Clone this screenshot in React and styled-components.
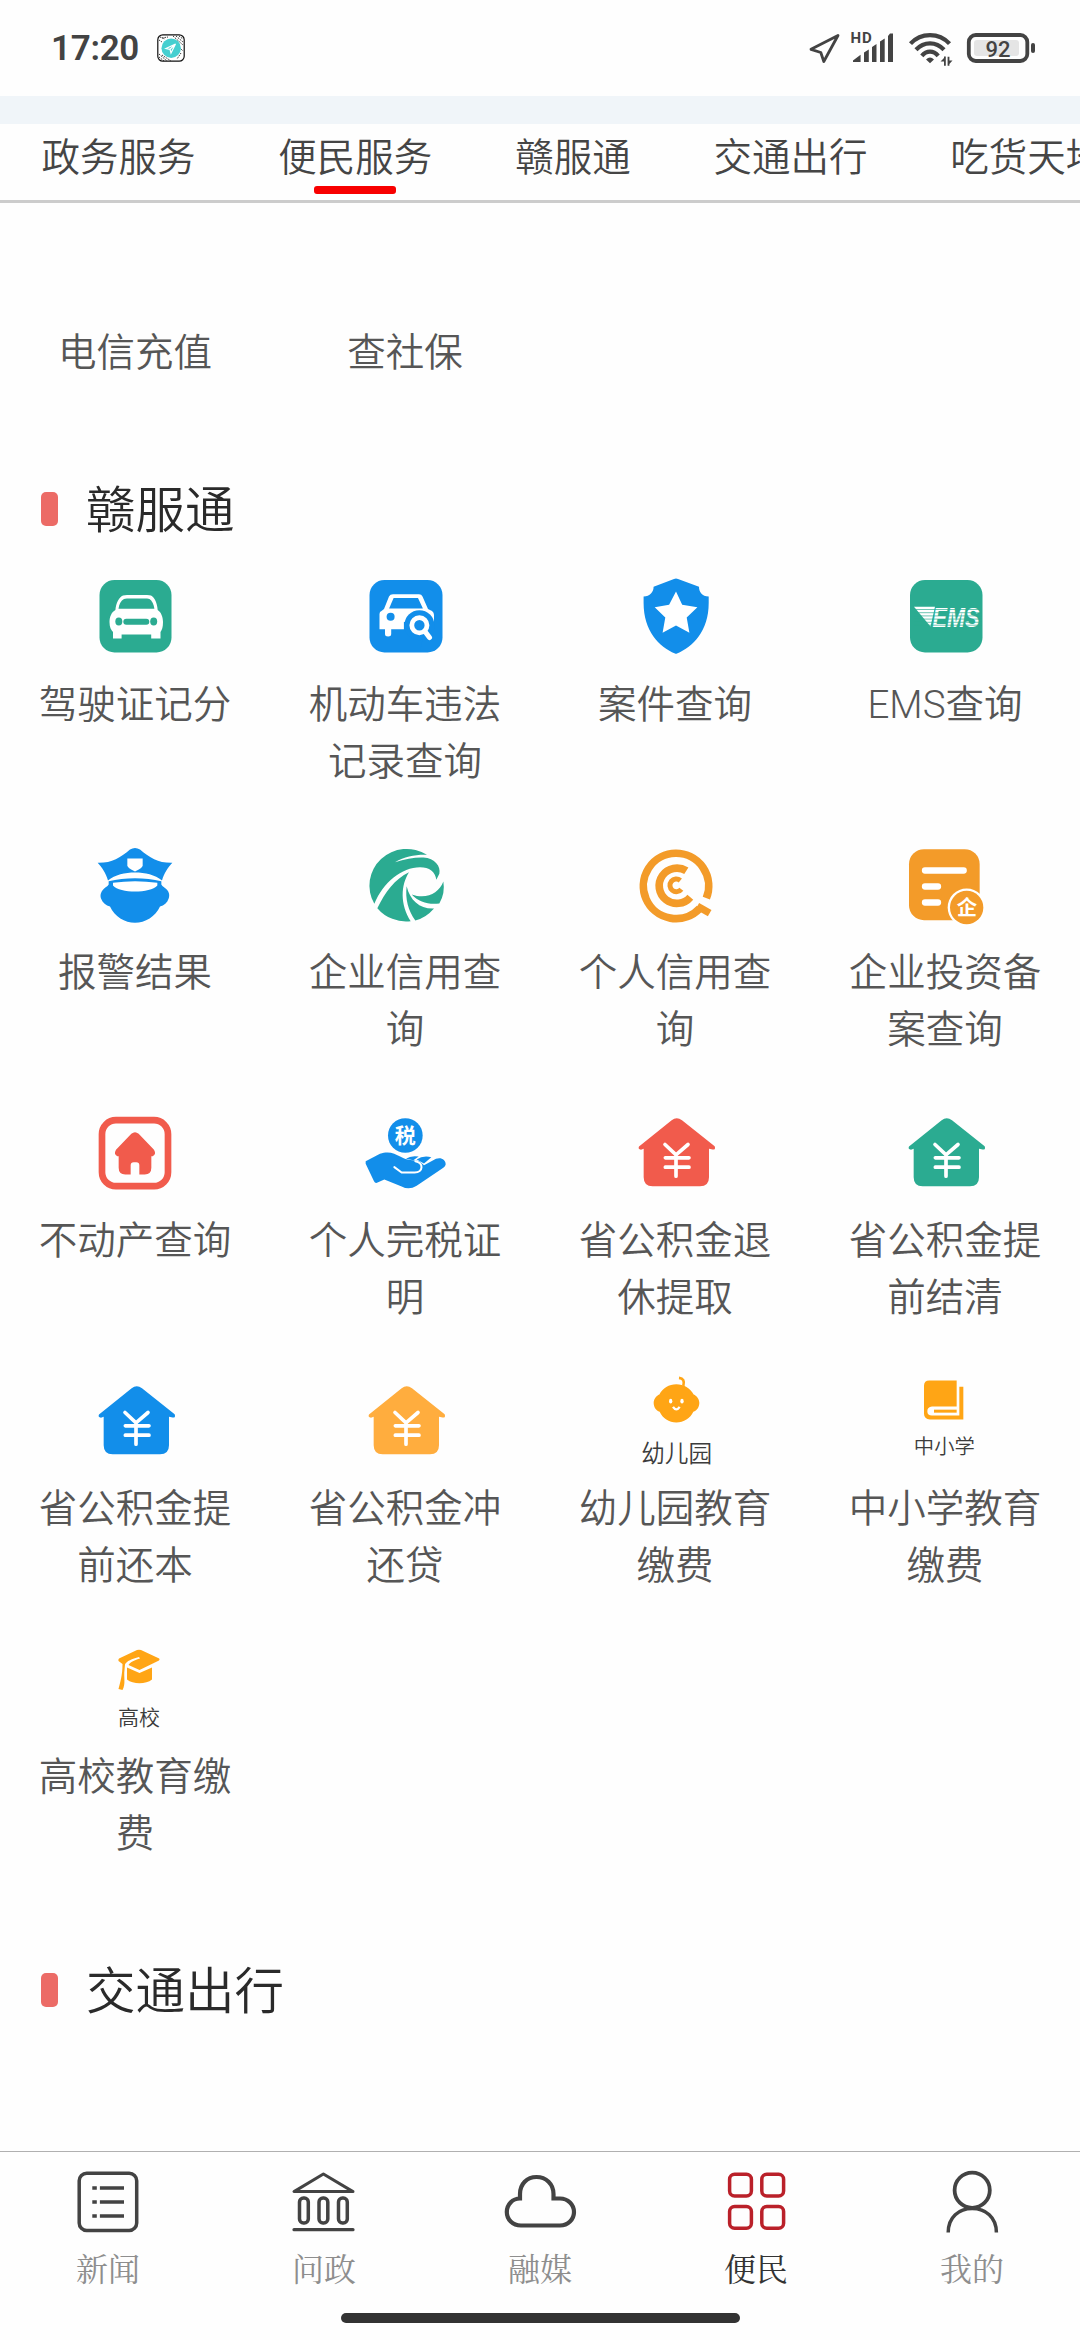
import React from "react";
import styled, { createGlobalStyle } from "styled-components";

const GREEN = "#2bab91";
const BLUE = "#128eea";
const RED = "#f15b4c";
const ORANGE = "#f39b29";
const AMBER = "#ffa515";
const DARK = "#434343";

const GlobalStyle = createGlobalStyle`
  * {
    box-sizing: border-box;
  }
  body {
    margin: 0;
    background: #fefefe;
    font-family: "Noto Sans CJK SC", "Noto Sans", sans-serif;
  }
`;

const Page = styled.div`
  display: flex;
  flex-flow: column;
  width: 1080px;
  height: 2340px;
  overflow: hidden;
  background: #fefefe;
`;

const StatusBar = styled.header`
  display: flex;
  flex: none;
  align-items: center;
  height: 96px;
  padding: 0 44px 0 51px;
`;

const Clock = styled.span`
  width: 89px;
  padding-top: 2px;
  font: 600 35px/48px Roboto, sans-serif;
  letter-spacing: -0.3px;
  color: ${DARK};
  white-space: nowrap;
`;

const AppBadge = styled.svg`
  width: 28px;
  height: 28px;
  margin-left: 17px;
`;

const StatusIcons = styled.div`
  display: flex;
  align-items: center;
  margin-left: auto;
`;

const StatusIcon = styled.svg`
  width: ${(props) => props.$width}px;
  height: 48px;
  margin-left: ${(props) => props.$gap || 0}px;
`;

const Band = styled.div`
  flex: none;
  height: 28px;
  background: #f0f5f9;
`;

const Tabs = styled.nav`
  display: flex;
  flex: none;
  height: 79px;
  padding-left: 41.5px;
  gap: 82.8px;
  border-bottom: 3px solid #ccc;
  overflow: hidden;
`;

const Tab = styled.div`
  display: flex;
  flex: none;
  flex-flow: column;
  align-items: center;
  padding-top: 1.5px;
  font-size: 38.5px;
  line-height: 57px;
  font-weight: 350;
  color: #454545;
  white-space: nowrap;
`;

const TabLine = styled.i`
  width: 82px;
  height: 8px;
  margin-top: 3.5px;
  border-radius: 3px;
  background: #f80000;
`;

const Content = styled.main`
  flex: 1;
  padding-top: 5.5px;
  overflow: hidden;
`;

const SectionHeader = styled.h2`
  display: flex;
  align-items: center;
  height: 141px;
  margin: 0;
  padding: 38px 0 0 41px;
  gap: 28px;
  font-size: 49.5px;
  line-height: 74px;
  font-weight: 350;
  color: #2a2a2a;

  span {
    margin-top: -5px;
  }
`;

const Marker = styled.i`
  width: 17px;
  height: 34px;
  border-radius: 5px;
  background: #ec6b66;
`;

const Grid = styled.div`
  display: grid;
  grid-template-columns: repeat(4, 270px);
`;

const Cell = styled.div`
  display: flex;
  flex-flow: column;
  align-items: center;
  padding: 0 36px 38.5px;
`;

const CellIcon = styled.svg`
  flex: none;
  width: 110px;
  height: 110px;
  overflow: visible;
`;

const Label = styled.div`
  width: 198px;
  margin-top: 5.5px;
  font-family: Roboto, "Noto Sans CJK SC", sans-serif;
  font-size: 38.5px;
  line-height: 57px;
  font-weight: 350;
  color: #565656;
  text-align: center;
`;

const BottomBar = styled.footer`
  display: flex;
  flex: none;
  flex-flow: column;
  align-items: center;
  height: 189px;
  border-top: 1px solid #b0b0b0;
`;

const BottomTabs = styled.div`
  display: grid;
  grid-template-columns: repeat(5, 216px);
  height: 161px;
`;

const BottomTab = styled.div`
  display: flex;
  flex-flow: column;
  align-items: center;
  padding-top: 14px;
  font-family: "Noto Serif CJK SC", "Noto Serif SC", serif;
  font-size: 32px;
  line-height: 48px;
  color: ${(props) => (props.$active ? "#333" : "#8e8e8e")};

  svg {
    width: 80px;
    height: 72px;
    margin-bottom: 5px;
    fill: none;
    stroke: ${(props) => (props.$active ? "#ba2029" : DARK)};
    stroke-width: 3.5;
  }
`;

const HomeBar = styled.div`
  width: 399px;
  height: 10px;
  border-radius: 5px;
  background: #333;
`;

const CarIcon = () => (
  <CellIcon viewBox="0 0 110 110">
    <rect x="19.5" y="19" width="72" height="72.5" rx="15" fill={GREEN} />
    <path
      d="M35.4 49C36 42 39 36 43 34.4Q44.5 34 47 34H67Q69.5 34 71 34.6C75 37 77 42 77.7 49C81 51 83 56 83 61C83 66 82 69 80.5 71V77.5H71.2V73.5H41.6V77.5H33V71C31 69 29.5 66 29.5 61C29.5 56 31.5 51 35.4 49Z"
      fill="#fff"
    />
    <path
      d="M38.5 47.8C39 43 41 39.5 44 38Q45 37.5 47 37.5H67Q68.5 37.5 69.5 38C72 39.5 73.7 43 74.4 47.8Z"
      fill={GREEN}
    />
    <ellipse cx="38.8" cy="60.5" rx="3.5" ry="4.1" fill={GREEN} />
    <ellipse cx="73.7" cy="60.5" rx="3.5" ry="4.1" fill={GREEN} />
    <rect x="43.3" y="57.8" width="26" height="6" rx="3" fill={GREEN} />
  </CellIcon>
);

const CarSearchIcon = () => (
  <CellIcon viewBox="0 0 110 110">
    <rect x="19.5" y="19" width="73" height="72.5" rx="15" fill={BLUE} />
    <path
      d="M34 48L39 35.5Q40 33.2 43 33.2H69Q71.5 33.2 72.5 35.5L78 48L82 50Q84 51.5 84 54V61H53.9V68.2H41.2V73Q41.2 75.5 38.1 75.5Q35 75.5 35 73V68.2H29.5V53Q29.5 50.5 31.5 50Z"
      fill="#fff"
    />
    <path d="M39.1 47.6L43.6 37H68L72.9 47.6Z" fill={BLUE} />
    <circle cx="40.6" cy="55.8" r="4" fill={BLUE} />
    <circle cx="69.4" cy="64.2" r="15" fill={BLUE} />
    <path d="M75 66H84.5V90H70Z" fill={BLUE} />
    <circle cx="69.4" cy="64.2" r="7.6" fill="none" stroke="#fff" strokeWidth="4.8" />
    <path d="M75 70.5L79.5 76.5" stroke="#fff" strokeWidth="5" strokeLinecap="round" />
  </CellIcon>
);

const ShieldIcon = () => (
  <CellIcon viewBox="0 0 110 110">
    <path
      d="M54 18Q56 17 58 18L79 25.8C79 31 82 35.5 88.7 35.5V42C88.7 70 73 86 57 92.5Q56 93 55 92.5C39 86 23.6 70 23.6 42V35.5C30 35.5 33.6 31 33.6 25.8Z"
      fill={BLUE}
    />
    <path
      d="M56 30.5L62.2 43.8L77.4 46.2L66.7 56.5L69.4 71.8L56 64.5L42.6 71.8L45.3 56.5L34.7 46.2L49.1 43.8Z"
      fill="#fff"
    />
  </CellIcon>
);

const EmsIcon = () => (
  <CellIcon viewBox="0 0 110 110">
    <rect x="20" y="19" width="72.5" height="72.5" rx="15" fill={GREEN} />
    <path d="M24 45.8H45L40.5 65.5Z" fill="#fff" />
    <text
      x="42.5"
      y="66"
      textLength="47"
      lengthAdjust="spacingAndGlyphs"
      fontFamily="Liberation Sans, sans-serif"
      fontSize="27"
      fontWeight="700"
      fontStyle="italic"
      fill="#fff"
    >
      EMS
    </text>
    <path
      d="M24 48.5H92M24 51.7H92M24 54.9H92M24 58.1H92M24 61.3H92M24 64.2H92"
      stroke={GREEN}
      strokeWidth=".9"
      opacity=".75"
    />
  </CellIcon>
);

const PoliceIcon = () => (
  <CellIcon viewBox="60 25.5 330 330">
    <path
      d="M113 127C155 128 180 112 210 87Q225 78 240 87C270 112 295 128 337 127C325 140 312 158 306 180C285 163 255 156 225 156C195 156 165 163 144 180C138 158 125 140 113 127Z"
      fill={BLUE}
    />
    <path
      d="M146 182C195 170 255 170 304 182V192Q306 196 313 201C327 210 330 222 326 234C322 247 312 255 300 258C287 288 255 307 225 307C195 307 163 288 150 258C138 255 128 247 123 234C119 222 124 210 136 201Q144 196 146 192Z"
      fill={BLUE}
    />
    <path d="M159 187Q225 178 292 187V195C270 219 180 219 159 195Z" fill="#fff" />
    <path d="M202 114H248V134Q248 142 225 153Q202 142 202 134Z" fill="#fff" />
  </CellIcon>
);

const SwirlIcon = () => (
  <CellIcon viewBox="870 25.5 330 330">
    <g fill={GREEN}>
      <path d="M943 250A112 110 0 0 1 1101 103C1065 102 1035 108 1005 125C1035 116 1065 110 1090 111C1125 113 1143 138 1138 160L1129 178C1126 153 1108 140 1080 140C1025 140 970 185 943 250Z" />
      <path d="M952 263C975 215 1005 175 1047 155C1022 195 1020 250 1052 302A112 110 0 0 1 952 263Z" />
      <path d="M1040 197C1035 235 1045 270 1066 300Q1098 292 1122 264C1080 266 1050 240 1040 197Z" />
      <path d="M1055 222C1100 238 1137 218 1150 183Q1156 218 1138 249C1105 253 1077 245 1055 222Z" />
    </g>
  </CellIcon>
);

const CreditIcon = () => (
  <CellIcon viewBox="180 25.5 330 330">
    <g fill="none" stroke={ORANGE}>
      <path d="M439 233A98 98 0 1 0 419 264" strokeWidth="23" />
      <path d="M412 257L449 278" strokeWidth="22" />
      <path d="M379 151A53 53 0 1 0 391 230" strokeWidth="23" />
      <path d="M361 180A19 19 0 1 0 364 206" strokeWidth="15" />
    </g>
  </CellIcon>
);

const InvestIcon = () => (
  <CellIcon viewBox="990 25.5 330 330">
    <rect x="1047" y="86" width="212" height="213" rx="45" fill={ORANGE} />
    <path
      d="M1095 150H1211M1095 198H1134M1095 246H1134"
      stroke="#fff"
      strokeWidth="19"
      strokeLinecap="round"
    />
    <circle cx="1220" cy="261" r="57" fill="#fff" />
    <circle cx="1220" cy="261" r="50" fill={ORANGE} />
    <text x="1221" y="283" textAnchor="middle" fontSize="61" fontWeight="700" fill="#fff">
      企
    </text>
  </CellIcon>
);

const EstateIcon = () => (
  <CellIcon viewBox="60 19.5 330 330">
    <rect x="126" y="89" width="198" height="198" rx="42" fill="none" stroke={RED} strokeWidth="20" />
    <path
      d="M214 130Q225 120 236 130L282 178Q290 192 278 197H274V232Q274 252 254 252H238V224Q238 215 229 215H221Q212 215 212 224V252H196Q176 252 176 232V197H172Q160 192 168 178Z"
      fill={RED}
    />
  </CellIcon>
);

const TaxIcon = () => (
  <CellIcon viewBox="870 19.5 330 330">
    <circle cx="1036" cy="135" r="52" fill={BLUE} />
    <text x="1036" y="158" textAnchor="middle" fontSize="63" fontWeight="700" fill="#fff">
      税
    </text>
    <g fill={BLUE}>
      <path d="M1038 205Q1052 194 1076 198L1060 209Z" />
      <path d="M1070 207Q1088 194 1114 200L1092 219Z" />
      <path d="M917 212L960 190C985 181 1003 188 1022 199C1042 211 1060 208 1078 212L1092 224L1128 205C1142 199 1158 207 1157 222Q1156 228 1150 232L1070 286Q1047 300 1025 288L973 267L951 277Q945 279 942 272L917 220Z" />
    </g>
    <path
      d="M1003 230L1025 246H1064C1090 246 1092 216 1066 212"
      fill="none"
      stroke="#fff"
      strokeWidth="6"
      strokeLinecap="round"
    />
  </CellIcon>
);

const FundIcon = ({ color }) => (
  <CellIcon viewBox="180 19.5 330 330">
    <path
      d="M335 89Q350 78 366 89L464 167Q468 178 458 177L447 175V260Q447 287 420 287H278Q251 287 251 260V175L243 178Q233 176 237 168Z"
      fill={color}
    />
    <path
      d="M315 162L348 193L384 162M316 202H387M316 230H387M348 193V257"
      fill="none"
      stroke="#fff"
      strokeWidth="11"
      strokeLinecap="round"
    />
  </CellIcon>
);

const ChildIcon = () => (
  <CellIcon viewBox="180 43.5 330 330">
    <path
      d="M349 101C371 101 391 112 401 132C411 136 418 147 418 157C418 170 411 180 400 184C391 204 371 216 349 216C327 216 308 204 299 184C288 180 281 170 281 157C281 147 288 136 298 132C308 112 327 101 349 101Z"
      fill={AMBER}
    />
    <path d="M357 82Q376 84 370 106" fill="none" stroke={AMBER} strokeWidth="8" />
    <ellipse cx="332" cy="152" rx="5" ry="7" fill="#fff" />
    <ellipse cx="366" cy="152" rx="5" ry="7" fill="#fff" />
    <path d="M339 169Q349 184 359 169" fill="none" stroke="#fff" strokeWidth="7" />
    <text x="350" y="334" textAnchor="middle" fontSize="71" fontWeight="350" fill="#3c3c3c">
      幼儿园
    </text>
  </CellIcon>
);

const BookIcon = () => (
  <CellIcon viewBox="990 43.5 330 330">
    <path
      d="M1108 90H1190V168H1116Q1102 170 1102 182Q1102 195 1116 195H1198V109H1210V207H1110Q1092 206 1092 190V106Q1092 90 1108 90Z"
      fill={AMBER}
    />
    <path d="M1122 182H1190" stroke={AMBER} strokeWidth="9" />
    <text x="1153" y="309" textAnchor="middle" fontSize="61" fontWeight="350" fill="#3c3c3c">
      中小学
    </text>
  </CellIcon>
);

const CollegeIcon = () => (
  <CellIcon viewBox="0 0 110 110">
    <g fill={AMBER}>
      <path d="M57 17Q59 16.3 61 17L79.2 25.5Q80 26.5 79 27.5L59.5 37L48.5 32C50 29 55 27 60 25.5L59 24C52 26 46.5 28 45 31.5L44.5 37C43.5 44 46 51 42.5 57L38.5 56C40 50 42.5 43 42.5 31L38.5 28Q38 26.5 39 25.5Z" />
      <path d="M47 34.5L59.5 40L72 34.5V46.5C66 51.5 53 51.5 47 46.5Z" />
    </g>
    <text x="59" y="92" textAnchor="middle" fontSize="21" fontWeight="350" fill="#3c3c3c">
      高校
    </text>
  </CellIcon>
);

const services = [
  { label: "驾驶证记分", icon: <CarIcon /> },
  { label: "机动车违法记录查询", icon: <CarSearchIcon /> },
  { label: "案件查询", icon: <ShieldIcon /> },
  { label: "EMS查询", icon: <EmsIcon /> },
  { label: "报警结果", icon: <PoliceIcon /> },
  { label: "企业信用查询", icon: <SwirlIcon /> },
  { label: "个人信用查询", icon: <CreditIcon /> },
  { label: "企业投资备案查询", icon: <InvestIcon /> },
  { label: "不动产查询", icon: <EstateIcon /> },
  { label: "个人完税证明", icon: <TaxIcon /> },
  { label: "省公积金退休提取", icon: <FundIcon color={RED} /> },
  { label: "省公积金提前结清", icon: <FundIcon color={GREEN} /> },
  { label: "省公积金提前还本", icon: <FundIcon color={BLUE} /> },
  { label: "省公积金冲还贷", icon: <FundIcon color="#ffad3e" /> },
  { label: "幼儿园教育缴费", icon: <ChildIcon /> },
  { label: "中小学教育缴费", icon: <BookIcon /> },
  { label: "高校教育缴费", icon: <CollegeIcon /> },
];

const tabs = ["政务服务", "便民服务", "赣服通", "交通出行", "吃货天地"];

const bottomTabs = [
  {
    label: "新闻",
    icon: (
      <>
        <rect x="11.2" y="7.3" width="57.5" height="57.2" rx="7.5" />
        <path d="M24.3 22H28.8M31.9 22H56M24.3 36H28.8M31.9 36H56M24.3 50H28.8M31.9 50H56" />
      </>
    ),
  },
  {
    label: "问政",
    icon: (
      <>
        <path d="M39.4 8L10 25.6H69Z" strokeLinejoin="round" strokeWidth="3" />
        <rect x="15.5" y="32" width="8.8" height="25" rx="4" />
        <rect x="35" y="32" width="8.8" height="25" rx="4" />
        <rect x="54.5" y="32" width="8.8" height="25" rx="4" />
        <path d="M10 63.7H69" strokeLinecap="round" strokeWidth="3.2" />
      </>
    ),
  },
  {
    label: "融媒",
    icon: (
      <path
        d="M21 59.5C12.5 59.5 6.8 53.5 6.8 46C6.8 38.5 12.5 32.5 20 32.5V28C20 18 27 11 36.5 11C46 11 53.5 18 53.5 28V32.5H60C68 32.5 74 38.5 74 46C74 53.5 68 59.5 60 59.5Z"
        strokeWidth="4.2"
      />
    ),
  },
  {
    label: "便民",
    active: true,
    icon: (
      <>
        <rect x="13.6" y="8.3" width="21.8" height="21.8" rx="5" />
        <rect x="45.8" y="8.3" width="21.8" height="21.8" rx="5" />
        <rect x="13.6" y="40.5" width="21.8" height="21.8" rx="5" />
        <rect x="45.8" y="40.5" width="21.8" height="21.8" rx="5" />
      </>
    ),
  },
  {
    label: "我的",
    icon: (
      <>
        <circle cx="40.2" cy="24.2" r="17.6" strokeWidth="3.8" />
        <path d="M16.2 66.5C16.2 51 27 42.5 40.2 42.5S64.4 51 64.4 66.5" />
      </>
    ),
  },
];

const Status = () => (
  <StatusBar>
    <Clock>17:20</Clock>
    <AppBadge viewBox="0 0 28 28">
      <rect x=".8" y=".8" width="26.4" height="26.4" rx="5" fill="#fff" stroke="#111" strokeWidth="1.2" />
      <g stroke="#222" strokeWidth=".9" strokeDasharray="1.5 1" fill="none">
        <path d="M3 3L8 5M2 6L5 8M16 2L26 11M19 2L26 8M22 2L26 5M2 20L10 27M2 23L7 27M5 21L14 27M22 13L26 17M24 19L20 25M5 4L11 3" />
      </g>
      <circle cx="14.2" cy="14.2" r="9.7" fill="#45cfd0" />
      <path
        d="M18.5 10L9 14.5L13 15.3L14 19L18.5 10L13 15.3"
        fill="none"
        stroke="#fff"
        strokeWidth="1.2"
      />
    </AppBadge>
    <StatusIcons>
      <StatusIcon $width={34} viewBox="808 24 34 48">
        <path
          d="M838 35.5L811 49.3L820.8 52.5L823.8 61.5Z"
          fill="none"
          stroke={DARK}
          strokeWidth="2.8"
          strokeLinejoin="round"
        />
      </StatusIcon>
      <StatusIcon $width={45} $gap={8} viewBox="850 24 45 48">
        <text x="850.5" y="43" fontFamily="Roboto, sans-serif" fontSize="15" fontWeight="700" letterSpacing="1" fill={DARK}>
          HD
        </text>
        <path
          d="M853 62V60.5L860.6 54.7V62ZM864 62V52.5L868.8 49.5V62ZM872 62V47L876.5 44V62ZM880 62V41.5L884.7 38.5V62ZM888 62V36L890 33.5H893V62Z"
          fill={DARK}
        />
      </StatusIcon>
      <StatusIcon $width={45} $gap={13} viewBox="908 24 45 48">
        <g fill="none" stroke={DARK} strokeWidth="4.2">
          <path d="M910.5 43.7C921 32.3 939 32.3 949.5 43.7" />
          <path d="M916 49.8C924 41.3 936 41.3 944 49.8" />
          <path d="M921.8 55.8C926.5 50.3 933.5 50.3 938.2 55.8" />
        </g>
        <path d="M926 59.5Q930 55.5 934 59.5L930 63.2Z" fill={DARK} />
        <path d="M940.5 61.5L944 58V56.5H945.8V65.7H944V61.5ZM947.6 56.7H949.4V60.5H952.5L949.4 64V65.7H947.6Z" fill={DARK} />
      </StatusIcon>
      <StatusIcon $width={70} $gap={13} viewBox="966 24 70 48">
        <rect x="968.8" y="35" width="58.5" height="26" rx="7" fill="none" stroke={DARK} strokeWidth="3.8" />
        <rect x="974" y="40" width="45" height="16" rx="3" fill="#e5e5e5" />
        <rect x="1031" y="43" width="4" height="10" rx="2" fill={DARK} />
        <text x="998" y="56.5" textAnchor="middle" fontFamily="Roboto, sans-serif" fontSize="22" fontWeight="500" fill={DARK}>
          92
        </text>
      </StatusIcon>
    </StatusIcons>
  </StatusBar>
);

const Section = ({ title }) => (
  <SectionHeader>
    <Marker />
    <span>{title}</span>
  </SectionHeader>
);

const App = () => (
  <>
    <GlobalStyle />
    <Page>
      <Status />
      <Band />
      <Tabs>
        {tabs.map((tab, index) => (
          <Tab key={tab}>
            {tab}
            {index === 1 && <TabLine />}
          </Tab>
        ))}
      </Tabs>
      <Content>
        <Grid>
          {["电信充值", "查社保"].map((label) => (
            <Cell key={label}>
              <CellIcon />
              <Label>{label}</Label>
            </Cell>
          ))}
        </Grid>
        <Section title="赣服通" />
        <Grid>
          {services.map((item) => (
            <Cell key={item.label}>
              {item.icon}
              <Label>{item.label}</Label>
            </Cell>
          ))}
        </Grid>
        <Section title="交通出行" />
      </Content>
      <BottomBar>
        <BottomTabs>
          {bottomTabs.map((item) => (
            <BottomTab key={item.label} $active={item.active}>
              <svg viewBox="0 0 80 72">{item.icon}</svg>
              {item.label}
            </BottomTab>
          ))}
        </BottomTabs>
        <HomeBar />
      </BottomBar>
    </Page>
  </>
);

export default App;
